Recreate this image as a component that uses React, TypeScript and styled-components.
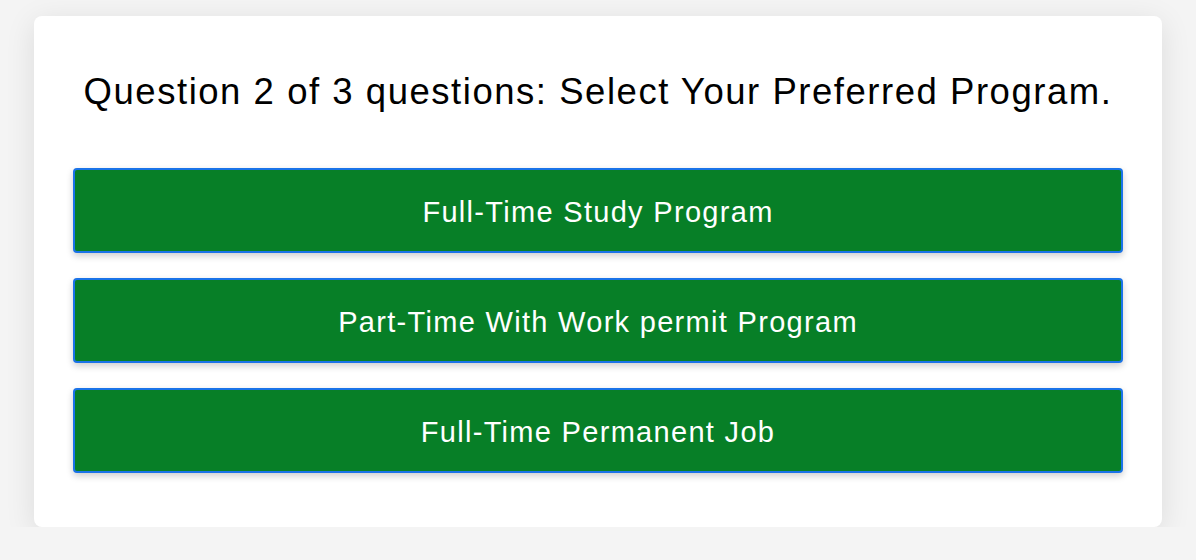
import React from "react";
import styled, { createGlobalStyle } from "styled-components";

const GlobalStyle = createGlobalStyle`
  html, body {
    margin: 0;
    padding: 0;
    background: #f4f4f4;
    font-family: "Liberation Sans", Arial, sans-serif;
  }
`;

const Page = styled.div`
  display: flex;
  justify-content: center;
  padding-top: 16px;
`;

const Card = styled.div`
  width: 1128px;
  box-sizing: border-box;
  background: #fff;
  border-radius: 8px;
  box-shadow: 0 6px 30px rgba(0, 0, 0, 0.1);
  padding: 54px 39px 54px;
`;

const Title = styled.h2`
  margin: 0 0 54px;
  font-size: 36.5px;
  line-height: 44px;
  letter-spacing: 0.042em;
  font-weight: 400;
  text-align: center;
  color: #000;
`;

const Options = styled.div`
  display: flex;
  flex-direction: column;
  gap: 25px;
`;

const OptionButton = styled.button`
  height: 85px;
  width: 100%;
  box-sizing: border-box;
  padding: 4px 0 0;
  background: #077f27;
  border: 2px solid #1a73e8;
  border-radius: 4px;
  box-shadow: 0 3px 7px rgba(0, 0, 0, 0.2);
  color: #fff;
  font-family: inherit;
  font-size: 29px;
  letter-spacing: 0.045em;
  cursor: pointer;
`;

const programs = [
  "Full-Time Study Program",
  "Part-Time With Work permit Program",
  "Full-Time Permanent Job",
];

const App: React.FC = () => {
  return (
    <>
      <GlobalStyle />
      <Page>
        <Card>
          <Title>Question 2 of 3 questions: Select Your Preferred Program.</Title>
          <Options>
            {programs.map((p) => (
              <OptionButton key={p}>{p}</OptionButton>
            ))}
          </Options>
        </Card>
      </Page>
    </>
  );
};

export default App;
